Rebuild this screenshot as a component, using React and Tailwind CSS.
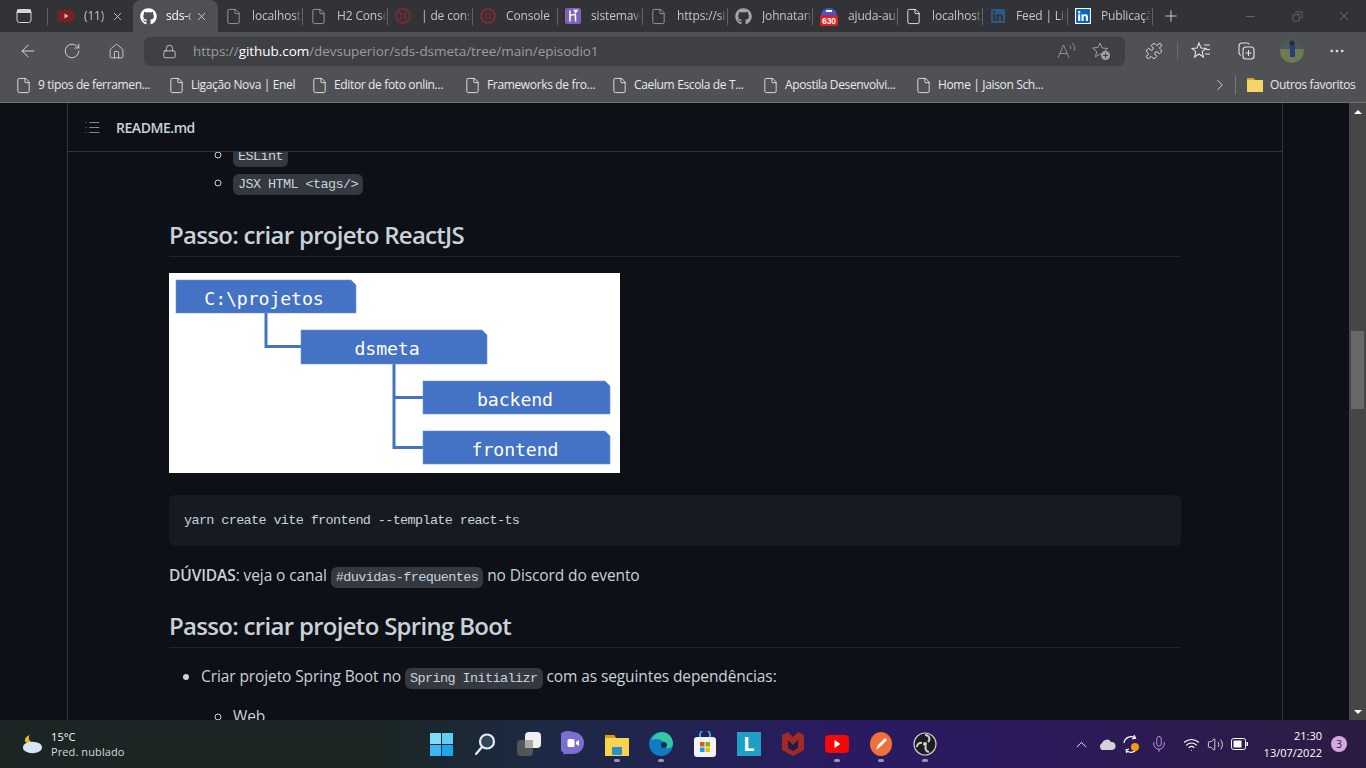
import {
  ArrowLeft, RotateCw, Home, Lock, File, X, Plus, Minus, Copy, MoreHorizontal, ChevronRight, ChevronUp,
  List, Mic, Wifi, Volume2, Puzzle,
} from "lucide-react";
import { FaGithub, FaLinkedin } from "react-icons/fa";

const uiFont = "font-['Open_Sans','Noto_Sans',sans-serif]";
const monoFont = "font-['Liberation_Mono',monospace]";

const TwilioIcon = () => (
  <svg viewBox="0 0 16 16" className="size-4 shrink-0">
    <circle cx="8" cy="8" r="7" fill="none" stroke="#7a2a33" strokeWidth="2" />
    <circle cx="6" cy="6" r="1.4" fill="#7a2a33" />
    <circle cx="10" cy="6" r="1.4" fill="#7a2a33" />
    <circle cx="6" cy="10" r="1.4" fill="#7a2a33" />
    <circle cx="10" cy="10" r="1.4" fill="#7a2a33" />
  </svg>
);

const YoutubeTab = () => (
  <svg viewBox="0 0 16 16" className="size-4 shrink-0">
    <rect x="0" y="2" width="16" height="12" rx="3" fill="#7d1f20" />
    <path d="M6.5 5.5v5l4-2.5z" fill="#c9c9c9" />
  </svg>
);

const HerokuIcon = () => (
  <svg viewBox="0 0 16 16" className="size-4 shrink-0">
    <rect width="16" height="16" rx="2" fill="#7f63b8" />
    <path d="M5 2.500V13.500M5 8c2-1.500 5-2 5.500-.5V13.500M9.500 2.500l2.500 0-1.500 2z" fill="none" stroke="#fff" strokeWidth="1.500" />
  </svg>
);

const BadgeIcon = () => (
  <svg viewBox="0 0 18 20" className="-mt-px h-5 w-[18px] shrink-0">
    <path d="M1 10a8 8 0 0 1 16 0z" fill="#3b5bd6" />
    <rect x="6" y="4" width="6" height="2" fill="#fff" />
    <rect x="0" y="9" width="18" height="11" rx="2" fill="#e02020" />
    <text x="9" y="18" textAnchor="middle" fontSize="8.5" fontWeight="700" fill="#fff" fontFamily="Liberation Sans">630</text>
  </svg>
);

const FileTab = ({ bright }) => (
  <File size={17} strokeWidth={1.2} className={bright ? "shrink-0 text-white" : "shrink-0 text-[#a5a6a8]"} />
);

const tabs = [
  { label: "(11)", icon: <YoutubeTab />, pad: "pl-[10px]", textW: "w-[22px] ml-[10px]", close: "ml-[5px]" },
  { label: "sds-dsmeta", icon: <FaGithub size={17} className="shrink-0 text-white" />, active: true, textW: "w-[26px] ml-[9px]", close: "ml-[3px]" },
  { label: "localhost", icon: <FileTab /> },
  { label: "H2 Console", icon: <FileTab /> },
  { label: "| de console", icon: <TwilioIcon /> },
  { label: "Console | Twilio", icon: <TwilioIcon /> },
  { label: "sistemavendas", icon: <HerokuIcon /> },
  { label: "https://site", icon: <FileTab /> },
  { label: "Johnatan", icon: <FaGithub size={17} className="shrink-0 text-[#a5a6a8]" /> },
  { label: "ajuda-aula", icon: <BadgeIcon /> },
  { label: "localhost", icon: <FileTab bright /> },
  { label: "Feed | Linkedin", icon: <FaLinkedin size={16} className="shrink-0 text-[#2d5a85]" /> },
  { label: "Publicação", icon: <FaLinkedin size={16} className="shrink-0 bg-white text-[#0a66c2]" /> },
];

const bookmarks = [
  { label: "9 tipos de ferramen...", w: "w-[153px]" },
  { label: "Ligação Nova | Enel", w: "w-[143px]" },
  { label: "Editor de foto onlin...", w: "w-[153px]" },
  { label: "Frameworks de fro...", w: "w-[147px]" },
  { label: "Caelum Escola de T...", w: "w-[151px]" },
  { label: "Apostila Desenvolvi...", w: "w-[153px]" },
  { label: "Home | Jaison Sch...", w: "w-[140px]" },
];

function TabStrip() {
  return (
    <div className="flex h-8 items-stretch bg-[#323336] text-xs text-[#c4c5c7]">
      <div className="relative flex w-[48px] items-center justify-center">
        <svg viewBox="0 0 16 16" className="size-4 text-[#d5d5d5]">
          <rect x="1" y="1.5" width="14" height="13" rx="2.5" fill="none" stroke="currentColor" />
          <rect x="1" y="1.5" width="14" height="3.5" fill="currentColor" />
        </svg>
        <span className="absolute top-[8px] right-0 h-[17px] w-px bg-[#626366]" />
      </div>
      {tabs.map((tab) => (
        <div
          key={tab.label + tab.textW}
          className={`flex w-[85px] shrink-0 items-center ${tab.pad || "pl-[7px]"} ${
            tab.active ? "rounded-t-lg bg-[#4f5053] text-white" : "relative"
          }`}
        >
          {tab.icon}
          <span
            className={`overflow-hidden tracking-[-0.15px] whitespace-nowrap [mask-image:linear-gradient(to_right,black_85%,transparent)] ${
              tab.textW || "ml-[10px] w-[50px]"
            }`}
          >
            {tab.label}
          </span>
          {tab.close && <X size={13} strokeWidth={1.4} className={`${tab.close} shrink-0 text-[#e6e6e6]`} />}
          {!tab.active && tab.label !== "(11)" && (
            <span className="absolute top-[8px] right-0 h-[17px] w-px bg-[#626366]" />
          )}
        </div>
      ))}
      <div className="flex w-[36px] items-center justify-center">
        <Plus size={18} strokeWidth={1.1} className="text-[#e4e4e4]" />
      </div>
      <div className="flex flex-1 items-center text-[#9a9b9d]">
        <Minus size={13} strokeWidth={1} className="ml-[55px]" />
        <Copy size={11} strokeWidth={1} className="ml-[35px] -scale-x-100" />
        <X size={14} strokeWidth={1} className="ml-[34px]" />
      </div>
    </div>
  );
}

function Toolbar() {
  return (
    <div className="flex h-9 items-center bg-[#505154] pt-[2px] text-[#e4e4e4]">
      <div className="flex w-[144px] items-center">
        <ArrowLeft size={20} strokeWidth={1.1} className="ml-[18px]" />
        <RotateCw size={18} strokeWidth={1.1} className="ml-[25px]" />
        <Home size={17} strokeWidth={1.1} className="ml-[27px]" />
      </div>
      <div className={`flex h-[29px] w-[981px] items-center rounded-md bg-[#3f4043] text-[13.500px] text-[#9b9c9e] ${uiFont}`}>
        <Lock size={15} strokeWidth={1.2} className="ml-[18px] text-[#e4e4e4]" />
        <span className="ml-[16px] tracking-[-0.05px]">
          https://<span className="text-white">github.com</span>/devsuperior/sds-dsmeta/tree/main/episodio1
        </span>
        <svg viewBox="0 0 20 18" className="mr-[15px] ml-auto h-[18px] w-5 text-[#8f9092]" fill="none" stroke="currentColor" strokeWidth="1">
          <path d="M2 16L7.500 3l5.500 13M4 11.500h7M13 3c1.500 1 2 2.500 1.500 4M16 1c2.500 2 3 5 2 8" />
        </svg>
        <svg viewBox="0 0 20 20" className="mr-[14px] size-5 text-[#a0a1a3]" fill="none" stroke="currentColor" strokeWidth="1">
          <path d="M9 2l2.200 5 5.300.5-4 3.500 1 3-4.500-1-4.500 2.800 1.200-5.300-4-3.500 5.300-.5z" />
          <circle cx="14.500" cy="14.500" r="4.500" fill="#a0a1a3" stroke="none" />
          <path d="M14.500 12v5M12 14.500h5" stroke="#3f4043" />
        </svg>
      </div>
      <Puzzle size={18} strokeWidth={1.2} className="ml-[20px]" />
      <span className="ml-[14px] h-[18px] w-px bg-[#6b6c6e]" />
      <svg viewBox="0 0 20 20" className="ml-[13px] size-5" fill="none" stroke="currentColor" strokeWidth="1.100">
        <path d="M8 2l2 5 5 .4-3.800 3.200 1.200 5.400L8 13l-4.500 3 1.200-5.400L1 7.400 6 7zM13 4h6M15 8.500h4M14 13h5" />
      </svg>
      <svg viewBox="0 0 20 20" className="ml-[25px] size-5" fill="none" stroke="currentColor" strokeWidth="1.100">
        <path d="M5 14.500A3 3 0 0 1 3 12V5a3 3 0 0 1 3-3h5a3 3 0 0 1 2.500 1.500" />
        <rect x="7" y="6" width="11" height="12" rx="3" />
        <path d="M12.500 9v6M9.500 12h6" />
      </svg>
      <svg viewBox="0 0 24 24" className="ml-[24px] size-6 rounded-full">
        <circle cx="12" cy="12" r="12" fill="#6d7a52" />
        <rect x="0" y="0" width="24" height="10" fill="#4d5560" />
        <rect x="10" y="3" width="5" height="15" fill="#22407a" />
        <circle cx="12" cy="4" r="2.5" fill="#2c2c2c" />
      </svg>
      <MoreHorizontal size={18} strokeWidth={1.6} className="ml-[24px]" />
    </div>
  );
}

function BookmarksBar() {
  return (
    <div className={`flex h-[35px] items-center border-b border-[#737375] bg-[#505154] pl-[15px] text-xs text-[#e9e9e9] ${uiFont}`}>
      {bookmarks.map((item) => (
        <div key={item.label} className={`flex ${item.w} shrink-0 items-center`}>
          <File size={17} strokeWidth={1.1} className="shrink-0 text-white" />
          <span className="-mt-px ml-[6px] tracking-[-0.35px] whitespace-nowrap">{item.label}</span>
        </div>
      ))}
      <ChevronRight size={18} strokeWidth={1.1} className="ml-[156px]" />
      <span className="ml-[6px] h-[18px] w-px bg-[#77787a]" />
      <svg viewBox="0 0 18 16" className="ml-[10px] h-4 w-[18px]">
        <path d="M1 1h6l2 2h8v12H1z" fill="#f5d564" />
        <path d="M1 1h6l2 2H1z" fill="#d8a62c" />
      </svg>
      <span className="-mt-px ml-[6px] tracking-[-0.35px] whitespace-nowrap">Outros favoritos</span>
    </div>
  );
}

const InlineCode = ({ children }) => (
  <code className={`${monoFont} rounded-md bg-[#343941] px-[5px] py-[3px] text-[13.500px] leading-none tracking-[-0.6px]`}>
    {children}
  </code>
);

const Heading = ({ children }) => (
  <h2 className="mt-6 mb-4 border-b border-[#21262d] pb-[6px] text-2xl leading-[30px] font-semibold tracking-[-0.7px]">
    {children}
  </h2>
);

function FolderBox({ x, y, w, h, label, textX }) {
  const points = `${x},${y} ${x + w - 5},${y} ${x + w},${y + 5} ${x + w},${y + h} ${x},${y + h}`;
  return (
    <g>
      <polygon points={points} fill="#4472c4" stroke="#6f93d3" strokeWidth="0.6" />
      <text
        x={textX}
        y={y + h / 2 + 8}
        textAnchor="middle"
        fill="#fff"
        fontSize="18.200"
        fontFamily="DejaVu Sans Mono, monospace"
      >
        {label}
      </text>
    </g>
  );
}

// folder tree picture from the readme
function FolderTree() {
  return (
    <svg viewBox="0 0 451 200" className="block h-[200px] w-[451px] bg-white">
      <path
        d="M97 40V73.500H132M225 91V174.500H254M225 124.500H254"
        fill="none"
        stroke="#4472c4"
        strokeWidth="3"
      />
      <FolderBox x={7} y={7} w={180} h={33} label="C:\projetos" textX={95} />
      <FolderBox x={132} y={57} w={186} h={34} label="dsmeta" textX={218} />
      <FolderBox x={254} y={108} w={187} h={33} label="backend" textX={346} />
      <FolderBox x={254} y={158} w={187} h={33} label="frontend" textX={346} />
    </svg>
  );
}

function Readme() {
  return (
    <div className="flex min-h-0 flex-1 bg-[#0d1117] text-[#c9d1d9]">
      <div className="w-[67px] shrink-0" />
      <div className={`flex w-[1216px] shrink-0 flex-col border-x border-[#30363d] ${uiFont}`}>
        <div className="flex h-[49px] shrink-0 items-center border-b border-[#30363d] pt-px pl-[16px]">
          <List size={17} strokeWidth={1.3} className="text-[#8b949e]" />
          <span className="ml-[15px] text-[14px] font-semibold tracking-[-0.45px]">README.md</span>
        </div>
        <div className="min-h-0 flex-1 overflow-hidden px-[101px] text-[15.500px] leading-6 tracking-[-0.1px]">
          <ul className="-mt-[8px] list-[circle] pl-16">
            <li className="h-6 leading-5"><InlineCode>ESLint</InlineCode></li>
            <li className="mt-1 h-6 leading-5"><InlineCode>{"JSX HTML <tags/>"}</InlineCode></li>
          </ul>
          <Heading>Passo: criar projeto ReactJS</Heading>
          <div className="mb-[22px]">
            <FolderTree />
          </div>
          <pre className={`${monoFont} mb-[17px] h-[51px] rounded-md bg-[#161b22] py-4 pr-4 pl-[15px] text-[13.500px] leading-[19px] tracking-[-0.65px]`}>
            yarn create vite frontend --template react-ts
          </pre>
          <p className="h-6">
            <strong className="font-semibold">DÚVIDAS</strong>: veja o canal <InlineCode>#duvidas-frequentes</InlineCode> no Discord do evento
          </p>
          <Heading>Passo: criar projeto Spring Boot</Heading>
          <ul className="list-disc pl-8">
            <li className="h-6">
              Criar projeto Spring Boot no <InlineCode>Spring Initializr</InlineCode> com as seguintes dependências:
              <ul className="mt-4 list-[circle] pl-8">
                <li>Web</li>
              </ul>
            </li>
          </ul>
        </div>
      </div>
      <div className="flex-1" />
      <div className="flex w-[17px] shrink-0 flex-col items-center bg-[#464646] pt-[7px] pb-[6px]">
        <span className="h-0 w-0 border-x-[4px] border-b-[4px] border-x-transparent border-b-white" />
        <span className="mt-[217px] h-[78px] w-[13px] bg-[#686868]" />
        <span className="mt-auto h-0 w-0 border-x-[4px] border-t-[4px] border-x-transparent border-t-white" />
      </div>
    </div>
  );
}

const TaskIcon = ({ children, dot }) => (
  <div className="relative flex h-[48px] w-[44px] shrink-0 items-center justify-center">
    {children}
    {dot && <span className="absolute bottom-[6px] h-[3px] w-[6px] rounded-full bg-[#9a9aa6]" />}
  </div>
);

function Taskbar() {
  return (
    <div
      className={`flex h-12 shrink-0 items-center bg-[linear-gradient(90deg,#1b2624_0%,#1b2624_28%,#1c2a45_40%,#2a1a62_62%,#2c1a5c_75%,#2c1c42_100%)] text-white ${uiFont}`}
    >
      <div className="flex w-[419px] shrink-0 items-center pl-[20px]">
        <svg viewBox="0 0 24 24" className="size-[23px]">
          <path d="M10 2c-2 4 0 7 4 8-3 2-8 1-9-2 0-3 2-5 5-6z" fill="#f0b429" />
          <ellipse cx="13" cy="15" rx="10" ry="6" fill="#d7e6f5" />
        </svg>
        <div className="ml-[8px] text-[11px] leading-[15px] tracking-[0.1px]">
          <div>15°C</div>
          <div className="text-[#d5d8d8]">Pred. nublado</div>
        </div>
      </div>
      <TaskIcon>
        <div className="grid size-[23px] grid-cols-2 gap-px">
          <span className="bg-[#7fdcf8]" />
          <span className="bg-[#5fcdf6]" />
          <span className="bg-[#38b8f5]" />
          <span className="bg-[#1ea5f0]" />
        </div>
      </TaskIcon>
      <TaskIcon>
        <svg viewBox="0 0 24 24" className="size-6" fill="none" stroke="#e8edf0" strokeWidth="2.2">
          <circle cx="14" cy="9.500" r="7" fill="#32465a" />
          <path d="M9 15l-6 7" strokeLinecap="round" />
        </svg>
      </TaskIcon>
      <TaskIcon>
        <div className="relative size-6">
          <span className="absolute top-0 right-0 size-[16px] rounded-sm bg-[#f0f0f0]" />
          <span className="absolute bottom-0 left-0 size-[16px] rounded-sm bg-[#5a5a5a]/90" />
          <span className="absolute top-[8px] left-[8px] size-[8px] bg-[#a8a8a8]" />
        </div>
      </TaskIcon>
      <TaskIcon>
        <svg viewBox="0 0 24 26" className="h-[26px] w-6">
          <path d="M12 1a11 11 0 0 1 0 22H3v2l-1-4A11 11 0 0 1 12 1z" fill="#7b6fd0" />
          <rect x="6.500" y="8" width="7" height="8" rx="1.500" fill="#fff" />
          <path d="M15 11l3-2v6l-3-2z" fill="#fff" />
        </svg>
      </TaskIcon>
      <TaskIcon dot>
        <svg viewBox="0 0 24 24" className="size-6">
          <path d="M0 3h9l2 3h13v18H0z" fill="#f8d44c" />
          <path d="M0 3h9l2 3H0z" fill="#d89c18" />
          <rect x="7" y="15" width="10" height="8" rx="1" fill="#2a8fd0" />
        </svg>
      </TaskIcon>
      <TaskIcon dot>
        <svg viewBox="0 0 24 24" className="size-6">
          <circle cx="12" cy="12" r="12" fill="#0f7bc0" />
          <path d="M2 9C4 3 9 0 13 0c6 0 11 5 11 12 0 3-3 5-7 4-3-1-2-3-2-4 0-4-8-7-13-3z" fill="#36c6a8" />
          <circle cx="15" cy="13" r="3" fill="#1b2a52" />
        </svg>
      </TaskIcon>
      <TaskIcon>
        <svg viewBox="0 0 24 26" className="h-[26px] w-6">
          <path d="M7 7V4a5 5 0 0 1 10 0v3" fill="none" stroke="#38b0e8" strokeWidth="1.800" />
          <rect x="1" y="6" width="22" height="20" rx="3" fill="#f3f3f3" />
          <rect x="7" y="11" width="4.500" height="4.500" fill="#f25022" />
          <rect x="12.500" y="11" width="4.500" height="4.500" fill="#7fba00" />
          <rect x="7" y="16.500" width="4.500" height="4.500" fill="#00a4ef" />
          <rect x="12.500" y="16.500" width="4.500" height="4.500" fill="#ffb900" />
        </svg>
      </TaskIcon>
      <TaskIcon>
        <div className="flex size-6 items-center justify-center bg-[#1f9fc6] text-[20px] leading-none font-bold">L</div>
      </TaskIcon>
      <TaskIcon>
        <svg viewBox="0 0 22 24" className="h-6 w-[22px]">
          <path d="M0 3l6-3 5 5 5-5 6 3v15l-11 6L0 18z" fill="#a32a22" />
          <path d="M6 8l5 5 5-5v8l-5 3-5-3z" fill="#1f1a50" />
        </svg>
      </TaskIcon>
      <TaskIcon dot>
        <svg viewBox="0 0 24 18" className="h-[18px] w-6">
          <rect width="24" height="18" rx="4" fill="#f40808" />
          <path d="M9.500 5v8l6-4z" fill="#fff" />
        </svg>
      </TaskIcon>
      <TaskIcon dot>
        <svg viewBox="0 0 22 24" className="h-6 w-[22px]">
          <ellipse cx="11" cy="12" rx="11" ry="12" fill="#f0703c" />
          <path d="M6 18l2-5 7-7 2 2-7 7z" fill="#fff" />
        </svg>
      </TaskIcon>
      <TaskIcon dot>
        <svg viewBox="0 0 24 24" className="size-6">
          <circle cx="12" cy="12" r="11" fill="#1c1c22" stroke="#c9c9c9" strokeWidth="1.200" />
          <path d="M12 3a4 4 0 0 1 3 7M4 15a4 4 0 0 1 5-4M16 20a4 4 0 0 1-3-6" fill="none" stroke="#d0d0d0" strokeWidth="2" />
          <circle cx="12" cy="12" r="2" fill="#d0d0d0" />
        </svg>
      </TaskIcon>
      <div className="ml-[126px] flex items-center">
        <ChevronUp size={17} strokeWidth={1.3} />
        <svg viewBox="0 0 18 12" className="ml-[8px] h-3 w-[18px]">
          <path d="M4 12a4 4 0 0 1 0-7 5 5 0 0 1 9-1 4 4 0 0 1 1 8z" fill="#d4d4d8" />
        </svg>
        <svg viewBox="0 0 18 20" className="ml-[6px] h-5 w-[18px]" fill="none" stroke="#fff" strokeWidth="1.200">
          <path d="M2 9a7 7 0 0 1 11-5M12 1l1.500 3L10 5M16 12a7 7 0 0 1-11 5M5 19l-1-3 3-1" />
          <circle cx="13" cy="13" r="4" fill="#f59a0c" stroke="none" />
        </svg>
        <Mic size={18} strokeWidth={1.1} className="ml-[10px] text-[#d8a8e8]" />
        <Wifi size={17} strokeWidth={1.5} className="ml-[15px]" />
        <Volume2 size={17} strokeWidth={1.1} className="ml-[7px]" />
        <svg viewBox="0 0 18 12" className="ml-[7px] h-3 w-[18px]" fill="none" stroke="#fff">
          <rect x="0.500" y="0.500" width="14" height="11" rx="2" />
          <rect x="2.500" y="2.500" width="8" height="7" fill="#fff" stroke="none" />
          <rect x="15.500" y="4" width="1.500" height="4" fill="#fff" stroke="none" />
        </svg>
      </div>
      <div className="ml-[10px] w-[63px] shrink-0 text-right text-[11px] leading-[17px] whitespace-nowrap">
        <div>21:30</div>
        <div>13/07/2022</div>
      </div>
      <span className="ml-[9px] flex size-4 shrink-0 items-center justify-center rounded-full bg-[#d7a8e0] text-[10px] text-[#222]">3</span>
    </div>
  );
}

export default function App() {
  return (
    <div className={`flex h-screen w-full flex-col overflow-hidden ${uiFont}`}>
      <TabStrip />
      <Toolbar />
      <BookmarksBar />
      <Readme />
      <Taskbar />
    </div>
  );
}
